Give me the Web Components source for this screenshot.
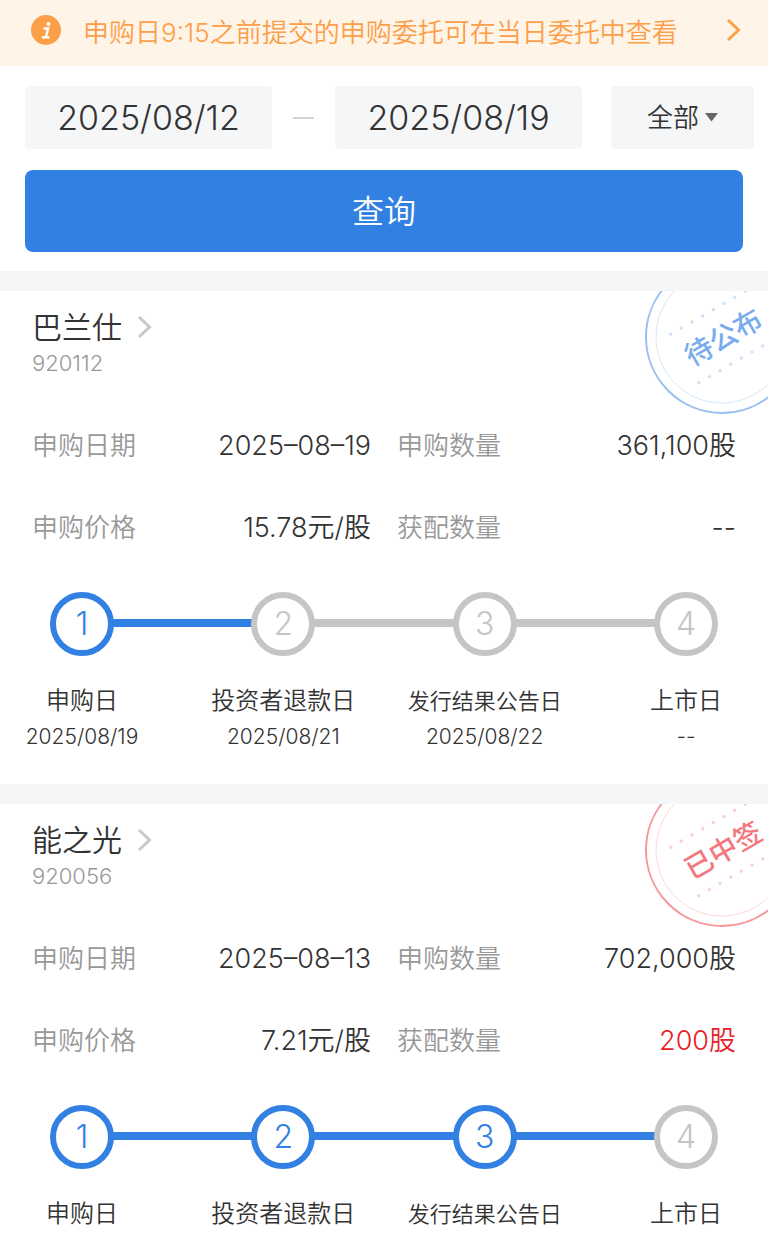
<!DOCTYPE html>
<html lang="zh-CN">
<head>
<meta charset="utf-8">
<meta name="viewport" content="width=device-width, initial-scale=1">
<title>申购查询</title>
<style>
  html {
    scrollbar-width: none;
  }

  body {
    margin: 0;
    background: #f5f6f8;
    color: #333;
    font-family: Inter, "Noto Sans CJK SC", sans-serif;
    font-weight: 350;
    --blue: #3280e2;
    --gray: #999;
    --panel: #f5f6f8;
  }

  main {
    display: flex;
    flex-direction: column;
    gap: 20px;
  }
</style>
</head>
<body>
<notice-bar href="#orders">申购日9:15之前提交的申购委托可在当日委托中查看</notice-bar>
<main>
  <query-form from="2025/08/12" to="2025/08/19"></query-form>

  <stock-card name="巴兰仕" code="920112">
    <status-stamp slot="stamp" text="待公布" color="#3280e2"></status-stamp>
    <info-item label="申购日期">2025–08–19</info-item>
    <info-item label="申购数量">361,100股</info-item>
    <info-item label="申购价格">15.78元/股</info-item>
    <info-item label="获配数量">--</info-item>
    <progress-steps slot="steps" done="1" dates="2025/08/19,2025/08/21,2025/08/22,--"></progress-steps>
  </stock-card>

  <stock-card name="能之光" code="920056">
    <status-stamp slot="stamp" text="已中签" color="#ee3038"></status-stamp>
    <info-item label="申购日期">2025–08–13</info-item>
    <info-item label="申购数量">702,000股</info-item>
    <info-item label="申购价格">7.21元/股</info-item>
    <info-item label="获配数量" highlight>200股</info-item>
    <progress-steps slot="steps" done="3" dates="2025/08/13,2025/08/15,2025/08/18,--"></progress-steps>
  </stock-card>
</main>

<script>
class NoticeBar extends HTMLElement {
  constructor() {
    super();
    this.attachShadow({ mode: 'open' });
    this.shadowRoot.innerHTML = `
      <style>
        :host {
          display: block;
          background: #fff4e8;
          color: #fc9f49;
        }

        a {
          display: flex;
          align-items: center;
          height: 60px;
          padding: 0 26px 6px 31px;
          color: inherit;
          font-size: 26px;
          text-decoration: none;
        }

        .text {
          flex: 1;
          margin-left: 22px;
          white-space: nowrap;
        }
      </style>
      <a href="${this.getAttribute('href')}">
        <svg width="30" height="30" viewBox="0 0 30 30" aria-hidden="true">
          <circle cx="15" cy="15" r="15" fill="currentColor"/>
          <circle cx="17.500" cy="9" r="2" fill="#fff"/>
          <path d="M12.500 13.500H17L15 22M11 22.400h7.500" fill="none" stroke="#fff" stroke-width="2.400"/>
        </svg>
        <span class="text"><slot></slot></span>
        <svg width="16" height="24" viewBox="0 0 16 24" fill="none" stroke="currentColor" stroke-width="3" aria-hidden="true">
          <path d="M2 2l10.500 10L2 22"/>
        </svg>
      </a>
    `;
  }
}

class QueryForm extends HTMLElement {
  constructor() {
    super();
    this.attachShadow({ mode: 'open' });
    this.shadowRoot.innerHTML = `
      <style>
        :host {
          display: block;
          background: #fff;
        }

        form {
          padding: 20px 14px 19px 25px;
        }

        .filters {
          display: flex;
          align-items: center;
        }

        input, select, button {
          box-sizing: border-box;
          margin: 0;
          border: 0;
          font: inherit;
          color: inherit;
        }

        input, select {
          height: 63px;
          border-radius: 4px;
          background: var(--panel);
        }

        input {
          flex: 1;
          min-width: 0;
          padding: 0;
          font-size: 34px;
          text-align: center;
        }

        .dash {
          width: 21px;
          height: 2px;
          margin: 0 21px;
          background: #d3d4da;
        }

        .type {
          display: grid;
          align-items: center;
          width: 143px;
          margin-left: 29px;
        }

        .type > * {
          grid-area: 1 / 1;
        }

        select {
          appearance: none;
          width: 100%;
          padding: 0 0 0 36px;
          font-size: 26px;
        }

        .type svg {
          justify-self: end;
          margin-right: 36px;
          pointer-events: none;
        }

        button {
          display: block;
          width: calc(100% - 11px);
          height: 82px;
          margin-top: 21px;
          padding: 0 0 4px;
          border-radius: 8px;
          background: var(--blue);
          color: #fff;
          font-size: 32px;
        }
      </style>
      <form onsubmit="return false">
        <div class="filters">
          <input type="text" name="from" aria-label="开始日期" value="${this.getAttribute('from')}">
          <span class="dash"></span>
          <input type="text" name="to" aria-label="结束日期" value="${this.getAttribute('to')}">
          <div class="type">
            <select name="type" aria-label="类型">
              <option>全部</option>
            </select>
            <svg width="13" height="9" viewBox="0 0 13 9" aria-hidden="true">
              <path d="M0 0h13L6.500 8.500z" fill="#666"/>
            </svg>
          </div>
        </div>
        <button type="submit">查询</button>
      </form>
    `;
  }
}

class StockCard extends HTMLElement {
  constructor() {
    super();
    this.attachShadow({ mode: 'open' });
    this.shadowRoot.innerHTML = `
      <style>
        :host {
          display: block;
          position: relative;
          overflow: hidden;
          padding: 16px 0 29px;
          background: #fff;
        }

        header {
          padding: 0 32px;
        }

        h2 {
          margin: 0;
          font-size: 30px;
          font-weight: inherit;
          line-height: 40px;
        }

        h2 a {
          display: inline-flex;
          align-items: center;
          gap: 15px;
          color: inherit;
          text-decoration: none;
        }

        p {
          margin: 0;
          color: var(--gray);
          font-size: 22px;
          line-height: 32px;
        }

        .info {
          display: grid;
          grid-template-columns: 1fr 1fr;
          gap: 42px 26px;
          margin: 47px 0 44px;
          padding: 0 32px;
        }

        ::slotted([slot="stamp"]) {
          position: absolute;
          top: 0;
          right: 0;
        }
      </style>
      <header>
        <h2>
          <a href="#${this.getAttribute('code')}">${this.getAttribute('name')}
            <svg width="15" height="24" viewBox="0 0 15 24" fill="none" stroke="#c8c8c8" stroke-width="3" aria-hidden="true">
              <path d="M2 2l10.500 10L2 22"/>
            </svg>
          </a>
        </h2>
        <p>${this.getAttribute('code')}</p>
      </header>
      <slot name="stamp"></slot>
      <div class="info"><slot></slot></div>
      <slot name="steps"></slot>
    `;
  }
}

class InfoItem extends HTMLElement {
  constructor() {
    super();
    this.attachShadow({ mode: 'open' });
    this.shadowRoot.innerHTML = `
      <style>
        :host {
          display: flex;
          justify-content: space-between;
          font-size: 26px;
          line-height: 40px;
          white-space: nowrap;
        }

        .label {
          color: var(--gray);
        }

        .value {
          font-size: 27px;
        }

        :host([highlight]) .value {
          color: #e6212a;
        }
      </style>
      <span class="label">${this.getAttribute('label')}</span>
      <span class="value"><slot></slot></span>
    `;
  }
}

class StatusStamp extends HTMLElement {
  constructor() {
    super();

    // two rows of dots run parallel to the tilted text
    let dots = '';
    for (let i = 0; i < 8; i++) {
      const x = -43 + i * 12.3;
      dots += `<circle cx="${x}" cy="-28" r="1.700"/><circle cx="${x}" cy="28" r="1.700"/>`;
    }

    this.attachShadow({ mode: 'open' });
    this.shadowRoot.innerHTML = `
      <style>
        :host {
          display: block;
          color: ${this.getAttribute('color')};
        }

        svg {
          display: block;
        }

        text {
          font-size: 28px;
          font-weight: 500;
        }
      </style>
      <svg width="124" height="123" viewBox="0 0 124 123">
        <g transform="translate(78 46)" fill="none" stroke="currentColor">
          <circle r="76" stroke-width="2" opacity=".5"/>
          <circle r="66" opacity=".2"/>
          <g transform="rotate(-30)" fill="currentColor" stroke="none">
            <g opacity=".22">${dots}</g>
            <text x="1" y="11" text-anchor="middle" opacity=".65">${this.getAttribute('text')}</text>
          </g>
        </g>
      </svg>
    `;
  }
}

class ProgressSteps extends HTMLElement {
  constructor() {
    super();
    const names = ['申购日', '投资者退款日', '发行结果公告日', '上市日'];
    const dates = this.getAttribute('dates').split(',');
    const done = Number(this.getAttribute('done'));

    let items = '';
    names.forEach((name, i) => {
      const state = i < done ? 'done' : '';
      const size = name.length > 6 ? 'long' : '';
      items += `
        <li class="${state}">
          <span class="circle">${i + 1}</span>
          <span class="name ${size}">${name}</span>
          <span class="date">${dates[i]}</span>
        </li>`;
      if (i < names.length - 1) {
        items += `<li class="line ${state}" role="presentation"></li>`;
      }
    });

    this.attachShadow({ mode: 'open' });
    this.shadowRoot.innerHTML = `
      <style>
        :host {
          display: block;
          padding: 0 50px;
        }

        ol {
          display: flex;
          margin: 0;
          padding: 0;
          list-style: none;
        }

        li {
          display: flex;
          flex-direction: column;
          align-items: center;
          width: 64px;
          line-height: 36px;
          white-space: nowrap;
          --tone: #c5c5c5;
        }

        li.done {
          --tone: var(--blue);
        }

        li.line {
          flex: 1;
          height: 8px;
          margin: 27px -1px 0;
          background: var(--tone);
        }

        .circle {
          box-sizing: border-box;
          width: 64px;
          height: 64px;
          margin-bottom: 27px;
          border: 6px solid var(--tone);
          border-radius: 50%;
          color: var(--tone);
          font-size: 32px;
          font-weight: 300;
          line-height: 52px;
          text-align: center;
        }

        .name {
          font-size: 24px;
        }

        .name.long {
          font-size: 22px;
        }

        .date {
          font-size: 21px;
        }
      </style>
      <ol>${items}</ol>
    `;
  }
}

customElements.define('notice-bar', NoticeBar);
customElements.define('query-form', QueryForm);
customElements.define('stock-card', StockCard);
customElements.define('info-item', InfoItem);
customElements.define('status-stamp', StatusStamp);
customElements.define('progress-steps', ProgressSteps);
</script>
</body>
</html>
